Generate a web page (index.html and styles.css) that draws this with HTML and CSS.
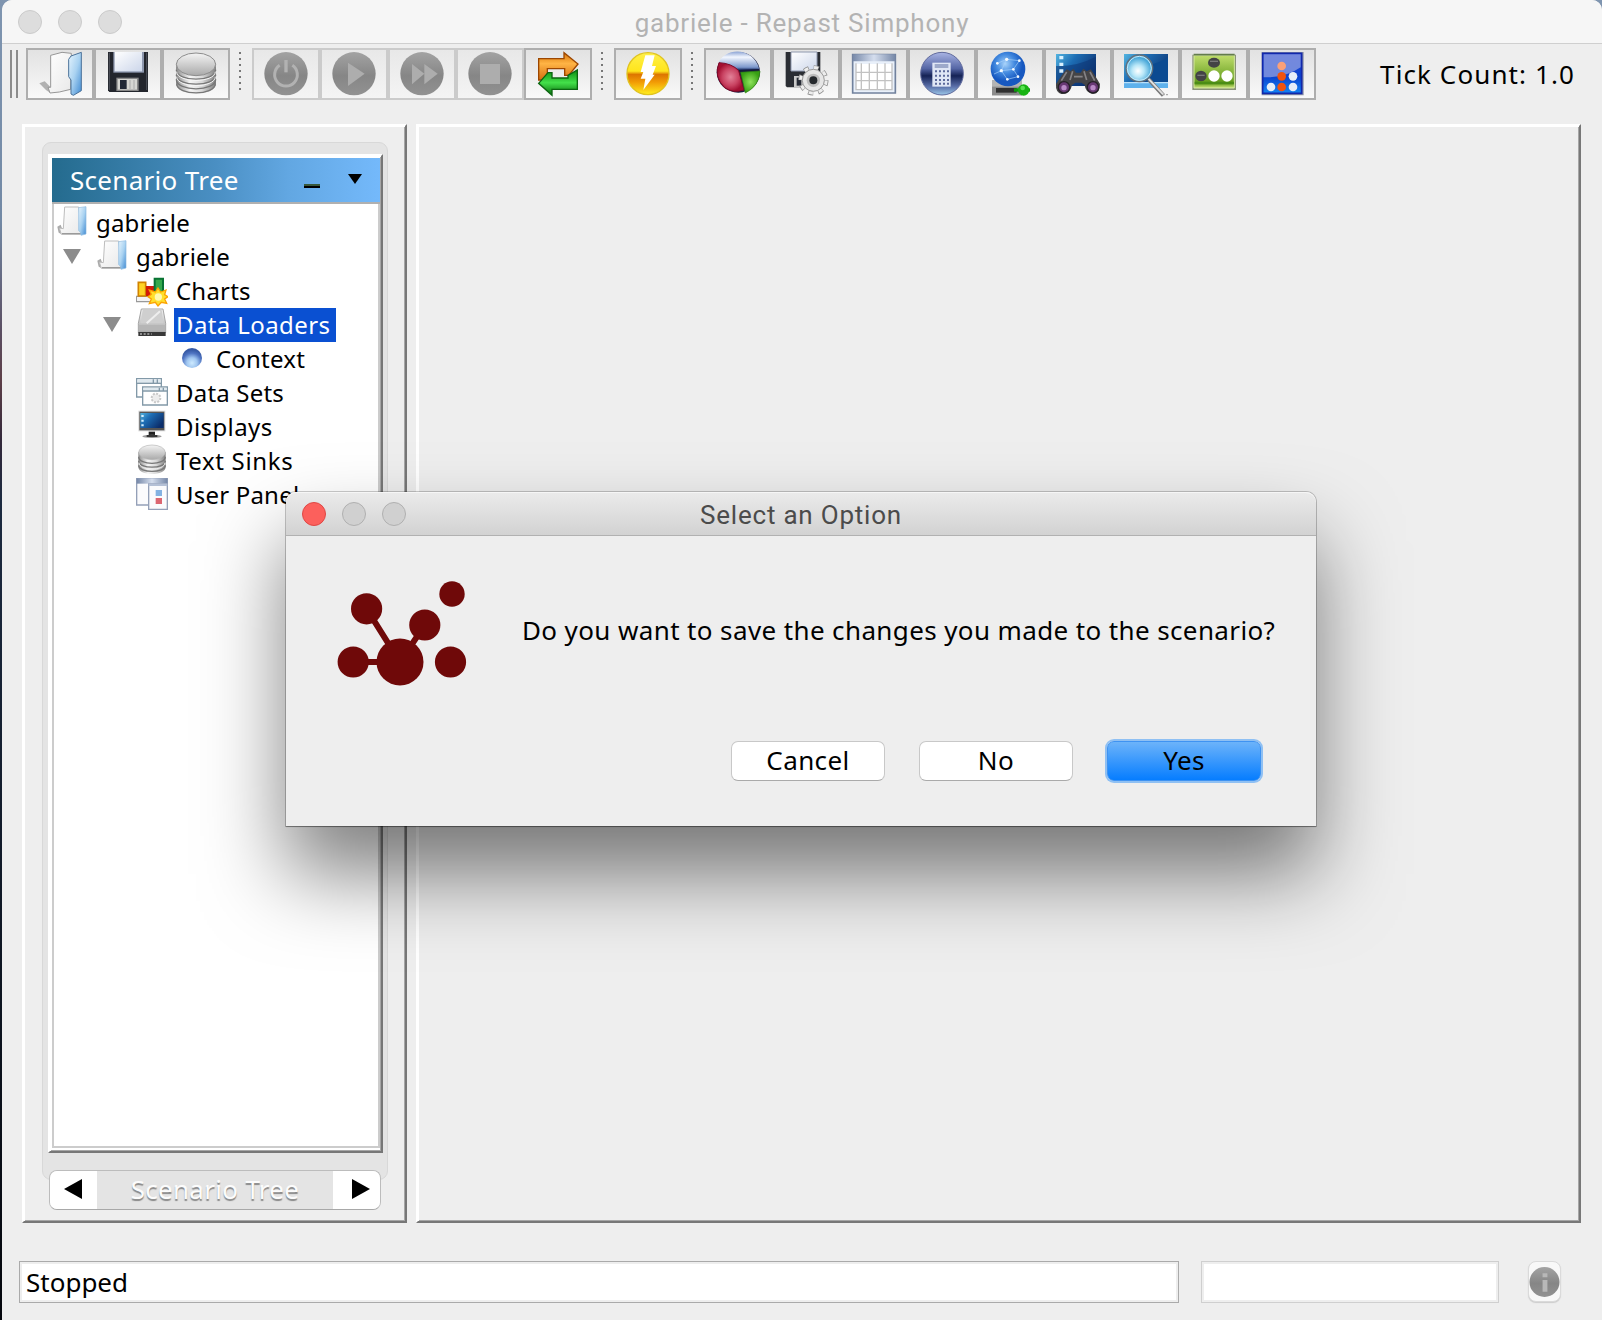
FILE: index.html
```html
<!DOCTYPE html>
<html lang="en">
<head>
<meta charset="utf-8">
<title>gabriele - Repast Simphony</title>
<link rel="stylesheet" href="styles.css">
</head>
<body>
<svg width="0" height="0" class="defs" aria-hidden="true">
  <defs>
    <linearGradient id="gDisc" x1="0" y1="0" x2="0" y2="1"><stop offset="0" stop-color="#a3a3a3"/><stop offset=".55" stop-color="#868686"/><stop offset="1" stop-color="#929292"/></linearGradient>
    <linearGradient id="gBlue" x1="0" y1="0" x2="1" y2="1"><stop offset="0" stop-color="#e6f4fd"/><stop offset=".5" stop-color="#a9d2f1"/><stop offset="1" stop-color="#3f8ad2"/></linearGradient>
    <linearGradient id="gPage" x1="0" y1="0" x2="1" y2="1"><stop offset="0" stop-color="#fff"/><stop offset="1" stop-color="#e9e9e9"/></linearGradient>
    <linearGradient id="gMetal" x1="0" y1="0" x2="1" y2="0"><stop offset="0" stop-color="#8b8b8b"/><stop offset=".35" stop-color="#f4f4f4"/><stop offset=".65" stop-color="#d9d9d9"/><stop offset="1" stop-color="#808080"/></linearGradient>
    <linearGradient id="gTop" x1="0" y1="0" x2="0" y2="1"><stop offset="0" stop-color="#f4f4f4"/><stop offset="1" stop-color="#a9a9a9"/></linearGradient>
    <linearGradient id="gLabel" x1="0" y1="0" x2="1" y2="1"><stop offset="0" stop-color="#fff"/><stop offset="1" stop-color="#ccd6ea"/></linearGradient>
    <linearGradient id="gOrange" x1="0" y1="0" x2="0" y2="1"><stop offset="0" stop-color="#d87408"/><stop offset=".4" stop-color="#ffb445"/><stop offset="1" stop-color="#d56e10"/></linearGradient>
    <linearGradient id="gGreen" x1="0" y1="0" x2="0" y2="1"><stop offset="0" stop-color="#0c8d10"/><stop offset=".5" stop-color="#43e04a"/><stop offset="1" stop-color="#076b0b"/></linearGradient>
    <linearGradient id="gBolt" x1="0" y1="0" x2="0" y2="1"><stop offset="0" stop-color="#fff04a"/><stop offset=".44" stop-color="#ffe51c"/><stop offset=".52" stop-color="#dd7600"/><stop offset=".7" stop-color="#f29b05"/><stop offset="1" stop-color="#fff01e"/></linearGradient>
    <linearGradient id="gPieTop" x1="0" y1="0" x2="0" y2="1"><stop offset="0" stop-color="#8ba3d4"/><stop offset=".3" stop-color="#f3f7ff"/><stop offset=".85" stop-color="#7d98cc"/><stop offset="1" stop-color="#152961"/></linearGradient>
    <radialGradient id="gPieRed"><stop offset="0" stop-color="#e38299"/><stop offset=".6" stop-color="#c94362"/><stop offset="1" stop-color="#a30f32"/></radialGradient>
    <radialGradient id="gPieGreen"><stop offset="0" stop-color="#8fe35c"/><stop offset="1" stop-color="#379f13"/></radialGradient>
    <linearGradient id="gHead" x1="0" y1="0" x2="1" y2="0"><stop offset="0" stop-color="#7688a8"/><stop offset=".5" stop-color="#d5deee"/><stop offset="1" stop-color="#7688a8"/></linearGradient>
    <linearGradient id="gCalc" x1="0" y1="0" x2="0" y2="1"><stop offset="0" stop-color="#a9b4e4"/><stop offset=".38" stop-color="#5566a5"/><stop offset=".55" stop-color="#152255"/><stop offset=".8" stop-color="#5a6fa9"/><stop offset="1" stop-color="#9cc8e8"/></linearGradient>
    <radialGradient id="gGlobe" cx=".42" cy=".35"><stop offset="0" stop-color="#a8d3fa"/><stop offset=".55" stop-color="#4289df"/><stop offset="1" stop-color="#1758c0"/></radialGradient>
    <linearGradient id="gScreen" x1="0" y1="0" x2="1" y2=".6"><stop offset="0" stop-color="#53b4e0"/><stop offset=".4" stop-color="#1d6db4"/><stop offset="1" stop-color="#0c2e6b"/></linearGradient>
    <radialGradient id="gLens" cx=".45" cy=".6"><stop offset="0" stop-color="#fff"/><stop offset=".45" stop-color="#b8e7f8"/><stop offset="1" stop-color="#46a6d8"/></radialGradient>
    <linearGradient id="gLawn" x1="0" y1="0" x2="0" y2="1"><stop offset="0" stop-color="#c0dd6c"/><stop offset=".5" stop-color="#86b53b"/><stop offset=".85" stop-color="#61991b"/><stop offset="1" stop-color="#d0e87c"/></linearGradient>
    <linearGradient id="gBoard" x1="0" y1="0" x2="0" y2="1"><stop offset="0" stop-color="#2440cf"/><stop offset=".6" stop-color="#0b45d0"/><stop offset="1" stop-color="#1485f4"/></linearGradient>
    <radialGradient id="gBall" cx=".5" cy=".75" r=".65"><stop offset="0" stop-color="#cdeaff"/><stop offset=".4" stop-color="#a0c6f0"/><stop offset=".75" stop-color="#4f74c2"/><stop offset="1" stop-color="#375aa5"/></radialGradient>
    <symbol id="folder" viewBox="168 288 96 102">
      <path d="M172 350L182 344L190 366L184 372L176 368Z" fill="#aaa"/>
      <path d="M194 291L236 291L246 366L242 373H184L178 354L190 356Z" fill="url(#gPage)" stroke="#bdbdbd" stroke-width="3"/>
      <path d="M186 371H244" stroke="#8d8d8d" stroke-width="3"/>
      <path d="M236 293L258 290V372L243 376L241 366L236 362Z" fill="url(#gBlue)" stroke="#8cb9df" stroke-width="2"/>
    </symbol>
  </defs>
</svg>

<div class="window">
  <header class="titlebar">
    <div class="lights"><i></i><i></i><i></i></div>
    <h1>gabriele - Repast Simphony</h1>
  </header>

  <div class="toolbar">
    <div class="grip"></div>
    <div class="group">
      <button class="tool"><svg viewBox="84 150 192 144"><path d="M118 250L134 244L152 262L150 278L138 270Z" fill="#8d8d8d" opacity=".65"/><path d="M152 166L186 157L214 160L212 268L178 276L150 279L144 262H152Z" fill="url(#gPage)" stroke="#979797" stroke-width="3"/><path d="M206 178L213 168L244 157V272L220 286L213 282V240L206 230Z" fill="url(#gBlue)" stroke="#4b7299" stroke-width="3"/></svg></button>
      <button class="tool"><svg viewBox="288 150 192 144"><path d="M324 156H444V276H328L324 271Z" fill="#23262d"/><path d="M328 158V270M440 158V270" stroke="#50545d" stroke-width="3"/><path d="M340 156H432V218H340Z" fill="#8e98ae"/><path d="M344 156H426V214H344Z" fill="url(#gLabel)"/><path d="M349 233H416V273H349Z" fill="#888"/><path d="M353 237H411V269H353Z" fill="#d6d6d2"/><path d="M360 240H380V267H360Z" fill="#222936"/><path d="M390 240V267M402 240V267" stroke="#aaa" stroke-width="3"/></svg></button>
      <button class="tool"><svg viewBox="492 150 192 144"><path d="M528 190V250C528 291 648 291 648 250V190Z" fill="url(#gMetal)"/><path d="M529 209C529 247 647 247 647 209M529 224C529 262 647 262 647 224M529 238C529 276 647 276 647 238M530 251C532 288 644 288 646 251" fill="none" stroke="#777" stroke-width="4"/><path d="M530 215C531 250 645 250 646 215M530 230C531 266 645 266 646 230" fill="none" stroke="#f5f5f5" stroke-width="3"/><ellipse cx="588" cy="193" rx="59" ry="34" fill="url(#gTop)" stroke="#8d8d8d" stroke-width="3"/></svg></button>
    </div>
    <div class="dots"></div>
    <div class="group">
      <button class="tool off"><svg viewBox="0 0 192 144"><circle cx="96" cy="71" r="65" fill="url(#gDisc)"/><path d="M77 46A34 34 0 1 0 115 46" fill="none" stroke="#b2b2b2" stroke-width="9"/><path d="M96 30V67" stroke="#b2b2b2" stroke-width="10"/></svg></button>
      <button class="tool off"><svg viewBox="0 0 192 144"><circle cx="96" cy="71" r="65" fill="url(#gDisc)"/><path d="M78 38L128 71L78 108Z" fill="#adadad"/></svg></button>
      <button class="tool off"><svg viewBox="0 0 192 144"><circle cx="96" cy="71" r="65" fill="url(#gDisc)"/><path d="M66 42L103 71L66 103ZM103 42L143 71L103 103Z" fill="#adadad"/></svg></button>
      <button class="tool off"><svg viewBox="0 0 192 144"><circle cx="96" cy="71" r="65" fill="url(#gDisc)"/><path d="M66 42H126V102H66Z" fill="#adadad"/></svg></button>
      <button class="tool"><svg viewBox="378 150 192 144"><path d="M416 176H492V158L534 192L506 226H494V206H442V240H416Z" fill="url(#gOrange)" stroke="#9c4600" stroke-width="4"/><path d="M532 210V268H456V286L416 250L444 218H456V234H504V226Z" fill="url(#gGreen)" stroke="#0b6510" stroke-width="4"/></svg></button>
    </div>
    <div class="dots"></div>
    <div class="group">
      <button class="tool"><svg viewBox="648 150 192 144"><circle cx="744" cy="221" r="63" fill="url(#gBolt)" stroke="#e0c320" stroke-width="4"/><path d="M736 166H764L756 198H768L758 224H764L730 270L736 236H722L730 216H722Z" fill="#fff"/></svg></button>
    </div>
    <div class="dots"></div>
    <div class="group">
      <button class="tool"><svg viewBox="48 150 192 144"><ellipse cx="145" cy="217" rx="65" ry="61" fill="#15193c"/><path d="M84 192C104 140 190 140 208 207L146 210Q120 190 84 192Z" fill="url(#gPieTop)"/><path d="M87 188Q126 190 146 212L162 270Q130 281 104 263Q70 230 87 188Z" fill="url(#gPieRed)" stroke="#7d0a29" stroke-width="3"/><path d="M152 217L210 213Q208 258 166 279Z" fill="url(#gPieGreen)" stroke="#2f8413" stroke-width="2"/></svg></button>
      <button class="tool"><svg viewBox="252 150 192 144"><path d="M287 156H391V262H291L287 258Z" fill="#2a2d33"/><path d="M303 156H381V213H303Z" fill="url(#gLabel)" stroke="#8e98ae" stroke-width="3"/><path d="M312 228H340V262H312Z" fill="#c9c9c9"/><path d="M320 233H334V257H320Z" fill="#262b35"/><circle cx="370" cy="241" r="38" fill="none" stroke="#8d8d8d" stroke-width="15" stroke-dasharray="15 14.85"/><circle cx="370" cy="241" r="38" fill="none" stroke="#ededed" stroke-width="10" stroke-dasharray="12 17.85" stroke-dashoffset="-1"/><circle cx="370" cy="241" r="33" fill="#e6e6e6" stroke="#9c9c9c" stroke-width="3"/><circle cx="370" cy="241" r="20" fill="#bdbdbd"/><circle cx="370" cy="241" r="12" fill="#24282c"/></svg></button>
      <button class="tool"><svg viewBox="456 150 192 144"><path d="M488 164H616V279H488Z" fill="#e9f0fa" stroke="#71819d" stroke-width="5"/><path d="M488 163H616V184H488Z" fill="url(#gHead)"/><path d="M498 192H606V269H498Z" fill="#fff"/><path d="M514 190V271M538 190V271M562 190V271M585 190V271M498 217H608M498 242H608M498 269H608M606 190V271M498 190V271" stroke="#c2c2c2" stroke-width="4"/></svg></button>
      <button class="tool"><svg viewBox="660 150 192 144"><circle cx="756" cy="221" r="64" fill="url(#gCalc)" stroke="#616b9d" stroke-width="3"/><path d="M727 188H782V260H727Z" fill="#dfe6f5"/><path d="M734 192H775V204H734Z" fill="#9da9ca"/><path d="M735 214H777M735 227H777M735 240H777M735 251H777" stroke="#5d6a9b" stroke-width="6" stroke-dasharray="6 6"/></svg></button>
      <button class="tool"><svg viewBox="864 150 192 144"><path d="M906 240H996V286H906Z" fill="#b4b4b4"/><path d="M906 260H996V286H906Z" fill="#8c8c8c"/><path d="M918 264H980V278H918Z" fill="#303030"/><circle cx="954" cy="207" r="52" fill="url(#gGlobe)"/><path d="M922 190L950 178L988 182L970 208L984 230M950 178L934 212L970 208M934 212L952 238L984 230M934 212L912 222" fill="none" stroke="#a6d0fa" stroke-width="2"/><g fill="#f4faff"><circle cx="922" cy="190" r="4"/><circle cx="950" cy="178" r="5"/><circle cx="988" cy="182" r="4"/><circle cx="934" cy="212" r="5"/><circle cx="970" cy="208" r="4"/><circle cx="952" cy="238" r="4"/><circle cx="984" cy="230" r="4"/></g><path d="M972 270H1020" stroke="#0a9a0a" stroke-width="10"/><circle cx="1001" cy="270" r="17" fill="#18b313"/><circle cx="998" cy="264" r="7" fill="#58e14f"/></svg></button>
      <button class="tool"><svg viewBox="1068 150 192 144"><path d="M1098 162H1218V258H1098Z" fill="url(#gScreen)"/><path d="M1098 198Q1160 200 1218 170V258H1098Z" fill="#0c3475" opacity=".55"/><path d="M1108 168H1120V178H1108ZM1108 188H1120V198H1108ZM1108 208H1120V218H1108Z" fill="#d9f1ff"/><path d="M1118 222L1130 208L1142 214L1150 206L1158 218H1172L1180 206L1190 214L1202 208L1212 222L1230 252Q1230 284 1206 281Q1186 276 1184 254L1174 248H1156L1146 256Q1140 284 1114 282Q1096 276 1098 252Z" fill="#454446"/><path d="M1130 216L1114 242M1148 214L1140 240M1200 216L1214 242M1182 214L1190 240M1152 230H1178" stroke="#858386" stroke-width="5"/><circle cx="1122" cy="262" r="17" fill="#673873" stroke="#252027" stroke-width="4"/><circle cx="1209" cy="262" r="17" fill="#673873" stroke="#252027" stroke-width="4"/><circle cx="1122" cy="263" r="8" fill="#b98ac6"/><circle cx="1209" cy="263" r="8" fill="#b98ac6"/></svg></button>
      <button class="tool"><svg viewBox="42 150 192 144"><path d="M72 162H204V264H72Z" fill="url(#gScreen)"/><path d="M140 196Q180 190 204 172V246H140Z" fill="#0b4a91"/><path d="M72 246H204V264H72Z" fill="#5eb1ec"/><path d="M72 248H204" stroke="#b8e0fa" stroke-width="4"/><path d="M146 238L190 286" stroke="#777" stroke-width="12"/><path d="M145 236L190 284" stroke="#e0e0e0" stroke-width="6"/><circle cx="118" cy="205" r="40" fill="url(#gLens)" stroke="#656f79" stroke-width="4"/><circle cx="118" cy="205" r="36" fill="none" stroke="#c5eafa" stroke-width="3"/><path d="M188 284H205" stroke="#aaa" stroke-width="4" stroke-dasharray="6 4"/></svg></button>
      <button class="tool"><svg viewBox="246 150 192 144"><path d="M277 164H408V270H277Z" fill="#8a9478"/><path d="M282 166H403V264H282Z" fill="url(#gLawn)" stroke="#d5e8a0" stroke-width="3"/><path d="M281 164H404" stroke="#637c4c" stroke-width="5"/><path d="M284 249H402" stroke="#4b8d15" stroke-width="7"/><ellipse cx="342" cy="188" rx="18" ry="15" fill="#434345"/><path d="M330 184H354" stroke="#777" stroke-width="4"/><ellipse cx="303" cy="228" rx="17" ry="16" fill="#434345"/><path d="M292 226H314" stroke="#777" stroke-width="4"/><circle cx="342" cy="228" r="17" fill="#fff"/><circle cx="381" cy="228" r="17" fill="#fff"/></svg></button>
      <button class="tool"><svg viewBox="450 150 192 144"><path d="M485 156H611V286H485Z" fill="#8d92a5"/><path d="M488 160H605V280H488Z" fill="url(#gBoard)" stroke="#1228ab" stroke-width="5"/><path d="M491 163H602V202Q556 234 491 232Z" fill="#8395df" opacity=".85"/><circle cx="545" cy="198" r="13" fill="#fba078"/><circle cx="545" cy="229" r="13" fill="#f0530f"/><circle cx="545" cy="261" r="13" fill="#f0530f"/><g fill="#e6eef8"><circle cx="579" cy="229" r="13"/><circle cx="513" cy="261" r="13"/><circle cx="579" cy="261" r="13"/></g></svg></button>
    </div>
    <div class="tick">Tick Count: 1.0</div>
  </div>

  <main class="workspace">
    <section class="panel side">
      <div class="dock">
        <div class="frame">
          <div class="frame-head">
            <span>Scenario Tree</span>
            <i class="minimize"></i>
            <svg class="menu-arrow" viewBox="0 0 14 10"><path d="M0 0H14L7 10Z"/></svg>
          </div>
          <div class="tree">
            <div class="row d0"><svg class="icon"><use href="#folder"/></svg><span class="tight">gabriele</span></div>
            <div class="row d1"><svg class="twisty" viewBox="0 0 33 34"><path d="M0 9H18L9 24Z"/></svg><svg class="icon"><use href="#folder"/></svg><span class="tight">gabriele</span></div>
            <div class="row d2"><svg class="icon" viewBox="408 492 96 102"><path d="M409 559H460V575H409Z" fill="#f3f3f3" stroke="#999" stroke-width="4"/><path d="M415 517H437V558H415Z" fill="#ffd426" stroke="#d28300" stroke-width="5"/><path d="M438 528H462V558H438Z" fill="#d21b08"/><path d="M464 506H489V550H464Z" fill="#35a84c" stroke="#087333" stroke-width="6"/><path d="M474 534L482 546L498 540L494 554L504 560L494 567L500 580L484 577L474 588L466 577L448 581L454 567L444 560L454 553L448 540L466 546Z" fill="#ffdf2d" stroke="#fca303" stroke-width="4"/><circle cx="475" cy="561" r="11" fill="#fff9b0"/></svg><span class="tight">Charts</span></div>
            <div class="row d2 open"><svg class="twisty" viewBox="0 0 33 34"><path d="M0 9H18L9 24Z"/></svg><svg class="icon" viewBox="408 594 96 102"><path d="M424 597H489L497 640V668H415V640Z" fill="url(#gTop)" stroke="#a5a5a5" stroke-width="3"/><path d="M428 600H485L490 640H422Z" fill="#cfcfcf"/><path d="M440 640L480 604" stroke="#eee" stroke-width="6"/><path d="M416 645H496V662H416Z" fill="#b6b6b6"/><path d="M415 666H497V678H415Z" fill="#383838"/><path d="M420 672H455" stroke="#aaa" stroke-width="5" stroke-dasharray="6 5"/></svg><span class="selected">Data Loaders</span></div>
            <div class="row d3"><svg class="icon" viewBox="528 6 96 102"><circle cx="576" cy="54" r="30" fill="url(#gBall)"/></svg><span class="tight">Context</span></div>
            <div class="row d2"><svg class="icon" viewBox="408 108 96 102"><path d="M410 116H484V171H410Z" fill="#fff" stroke="#8299a8" stroke-width="4"/><path d="M412 118H482V129H412Z" fill="#dfe9ef"/><path d="M410 130H484" stroke="#8299a8" stroke-width="4"/><path d="M428 141H502V195H428Z" fill="#fff" stroke="#8299a8" stroke-width="4"/><path d="M430 143H500V151H430Z" fill="#dfe9ef"/><path d="M428 153H502M460 118V129M472 118V129M478 143V152M490 143V152" stroke="#8299a8" stroke-width="4"/><circle cx="468" cy="174" r="13" fill="#ececec" stroke="#c9c9c9" stroke-width="6" stroke-dasharray="6 4"/></svg><span class="tight">Data Sets</span></div>
            <div class="row d2"><svg class="icon" viewBox="408 210 96 102"><path d="M415 212H496V274H415Z" fill="#dadada"/><path d="M418 215H493V271H418Z" fill="#555"/><path d="M421 219H491V264H421Z" fill="url(#gScreen)"/><path d="M424 225H431V231H424ZM424 239H431V245H424ZM424 253H431V259H424Z" fill="#d4efff"/><path d="M446 275H465V286H446Z" fill="#222"/><ellipse cx="456" cy="289" rx="29" ry="5" fill="#999"/><path d="M440 288H472" stroke="#222" stroke-width="5"/></svg><span>Displays</span></div>
            <div class="row d2"><svg class="icon" viewBox="408 312 96 102"><path d="M415 336V380C415 409 497 409 497 380V336Z" fill="url(#gMetal)"/><path d="M416 350C416 377 496 377 496 350M416 362C416 388 496 388 496 362M416 376C416 400 496 400 496 376" fill="none" stroke="#777" stroke-width="4"/><path d="M417 368C418 394 494 394 495 368" fill="none" stroke="#eee" stroke-width="3"/><ellipse cx="456" cy="337" rx="40" ry="22" fill="url(#gTop)" stroke="#b5b5b5" stroke-width="2"/></svg><span class="loose">Text Sinks</span></div>
            <div class="row d2"><svg class="icon" viewBox="408 414 96 102"><path d="M410 416H502V495H410Z" fill="#fbfbfd" stroke="#94a0b8" stroke-width="4"/><path d="M410 415H502V431H410Z" fill="url(#gHead)"/><path d="M446 432H502V508H446Z" fill="#fbfbfd" stroke="#94a0b8" stroke-width="4"/><path d="M446 431H502V438H446Z" fill="#b4c0d6"/><path d="M467 450H486V468H467Z" fill="#84b2e2"/><path d="M467 474H486V492H467Z" fill="#dc6671"/></svg><span class="tight">User Panel</span></div>
          </div>
        </div>
      </div>
      <div class="tabs">
        <button><svg viewBox="0 0 18 20"><path d="M18 0V20L0 10Z"/></svg></button>
        <span>Scenario Tree</span>
        <button><svg viewBox="0 0 18 20"><path d="M0 0V20L18 10Z"/></svg></button>
      </div>
    </section>
    <section class="panel canvas"></section>
  </main>

  <footer class="status">
    <div class="field message">Stopped</div>
    <div class="field progress"></div>
    <button class="info"><svg viewBox="0 0 32 32"><circle cx="16" cy="16" r="15.5" fill="url(#gDisc)"/><path d="M14 14H19V26H14ZM14 7H19V11H14Z" fill="#b8b8b8"/></svg></button>
  </footer>
</div>

<div class="dialog" role="dialog">
  <div class="dialog-bar">
    <div class="lights"><i class="close"></i><i></i><i></i></div>
    <h2>Select an Option</h2>
  </div>
  <div class="dialog-body">
    <svg class="logo" viewBox="336 580 132 108"><g fill="none" stroke="#6f0909" stroke-width="6"><path d="M366.600 608.800L400 662L424.800 625M353 662H400"/></g><g fill="#6f0909"><circle cx="366.600" cy="608.800" r="15.600"/><circle cx="424.800" cy="625" r="15.600"/><circle cx="452" cy="594" r="12.700"/><circle cx="353.200" cy="662" r="15.600"/><circle cx="400" cy="662" r="23.500"/><circle cx="450.500" cy="662" r="15.600"/></g></svg>
    <p>Do you want to save the changes you made to the scenario?</p>
  </div>
  <div class="actions">
    <button>Cancel</button>
    <button>No</button>
    <button class="primary">Yes</button>
  </div>
</div>
</body>
</html>
```
FILE: styles.css
```css
* { box-sizing: border-box; }

body {
  margin: 0;
  width: 1602px;
  height: 1320px;
  overflow: hidden;
  position: relative;
  padding-left: 2px;
  background: linear-gradient(#7f95b0 0, #7289a5 220px, #5b4f63 330px, #5d3f48 380px, #33283a 440px, #1c2a40 500px, #0d1420 1000px, #05070d 1320px);
  font-family: "Noto Sans", "Open Sans", sans-serif;
  font-size: 26px;
  color: #000;
}

button { font: inherit; color: inherit; padding: 0; margin: 0; border: 0; background: none; }
svg { display: block; }
.defs { position: absolute; }

.window {
  height: 1320px;
  display: flex;
  flex-direction: column;
  background: #eee;
  border-radius: 10px 10px 0 0;
}

.titlebar, .dialog-bar {
  display: grid;
  grid-template-columns: 1fr auto 1fr;
  align-items: center;
  height: 44px;
  flex: none;
  padding: 0 16px;
}
.titlebar {
  background: #f6f6f6;
  border-bottom: 1px solid #cfcfcf;
  border-radius: 10px 10px 0 0;
}
h1, h2 {
  margin: 0;
  padding-top: 2px;
  font: 400 26px/42px Roboto, sans-serif;
  letter-spacing: .78px;
  color: #b3b3b3;
}
.lights { display: flex; gap: 16px; }
.lights i {
  width: 24px;
  height: 24px;
  border-radius: 50%;
  background: #ddd;
  border: 1px solid #cbcbcb;
}

.toolbar {
  height: 80px;
  padding: 4px 27px 0 8px;
  display: flex;
  align-items: flex-start;
  flex: none;
}
.grip {
  width: 8px;
  height: 48px;
  margin: 2px 8px 0 0;
  border: solid #8c8c8c;
  border-width: 0 2px;
}
.group { display: flex; }
.tool {
  width: 68px;
  height: 52px;
  border: 2px solid #aeaeae;
  background: linear-gradient(#e2e2e2, #f9f9f9);
}
.tool svg { width: 64px; height: 48px; }
.tool.off { border-color: #cbcbcb; background: linear-gradient(#e8e8e8, #f4f4f4); }
.dots {
  width: 2px;
  height: 38px;
  margin: 4px 11px 0 9px;
  background: repeating-linear-gradient(#777 0 2px, transparent 2px 6px);
}
.tick {
  margin-left: auto;
  line-height: 52px;
  letter-spacing: 1.1px;
  white-space: pre;
}

.workspace { display: flex; gap: 9px; height: 1099px; padding: 0 21px 0 20px; flex: none; }
.panel, .frame {
  border: 2px solid;
  border-color: #fff #777 #777 #fff;
  box-shadow: inset 1px 1px #fff, inset -1px -1px #a6a6a6;
}
.side { width: 385px; flex: none; padding: 16px 17px 0 18px; }
.canvas { flex: 1; }
.dock {
  height: 1038px;
  padding: 11px 4px 0 5px;
  background: #e4e4e4;
  border: 1px solid #d8d8d8;
  border-radius: 9px;
}
.frame {
  height: 999px;
  padding: 2px 1px 3px 2px;
  background: #fff;
  display: flex;
  flex-direction: column;
}
.frame-head {
  height: 46px;
  flex: none;
  display: flex;
  padding-left: 18px;
  background: linear-gradient(90deg, #246b8e, #4a8fc3 50%, #62a7e2 72%, #74b9fb);
  border-bottom: 2px solid #b0b0b0;
  color: #fff;
  line-height: 44px;
  letter-spacing: .3px;
}
.frame-head span { width: 234px; }
.minimize { width: 16px; height: 4px; margin-top: 26px; background: #000; border-top: 2px solid #38583a; }
.menu-arrow { width: 14px; height: 10px; margin: 16px 0 0 28px; }

.tree { flex: 1; border: 2px solid #ccc; border-top: 0; padding-top: 2px; font-size: 24px; }
.row { display: flex; height: 34px; line-height: 34px; letter-spacing: .4px; }
.d0 { padding-left: 2px; }
.d1 { padding-left: 9px; }
.d2 { padding-left: 82px; }
.d2.open { padding-left: 49px; }
.d3 { padding-left: 122px; }
.icon { width: 32px; height: 34px; margin-right: 6px; flex: none; }
.twisty { width: 33px; height: 34px; fill: #8c8c8c; flex: none; }
.row span { padding-left: 2px; white-space: nowrap; }
.row .tight { letter-spacing: .2px; }
.row .loose { letter-spacing: .65px; }
.row .selected { width: 162px; background: #0a50d2; color: #fff; }

.tabs {
  position: relative;
  display: flex;
  width: 332px;
  height: 40px;
  margin: -10px 0 0 7px;
  border: 1px solid #bcbcbc;
  border-bottom-color: #a8a8a8;
  border-radius: 8px;
  background: #e4e4e4;
  overflow: hidden;
}
.tabs button { width: 47px; background: #fff; display: flex; align-items: center; }
.tabs button svg { width: 18px; height: 20px; margin: -2px 0 0 14px; }
.tabs button:last-child svg { margin-left: 19px; }
.tabs span {
  flex: 1;
  text-align: center;
  line-height: 36px;
  color: #fcfcfc;
  letter-spacing: .3px;
  text-shadow: 0 1.500px 1px #888;
}

.status { display: flex; padding: 38px 0 0 17px; align-items: flex-start; }
.field { height: 42px; border: 1px solid #aaa; background: #fff; box-shadow: inset 0 0 0 2px #eee; }
.message { width: 1160px; padding-left: 6px; line-height: 41px; }
.progress { width: 298px; margin-left: 22px; border-color: #cfcfcf; }
.info {
  width: 33px;
  height: 41px;
  margin-left: 29px;
  border: 1px solid #dadada;
  border-radius: 8px;
  background: #f8f8f8;
  box-shadow: 0 1px 1px #ccc;
}
.info svg { width: 31px; height: 32px; }

.dialog {
  position: absolute;
  left: 286px;
  top: 492px;
  width: 1030px;
  height: 334px;
  background: #eee;
  border-radius: 10px 10px 0 0;
  box-shadow: 0 0 0 1px rgba(0,0,0,.2), 0 1px 1px rgba(0,0,0,.3), 0 48px 82px rgba(0,0,0,.5);
}
.dialog-bar {
  background: linear-gradient(#ebebeb, #d2d2d2);
  border-bottom: 1px solid #b1b1b1;
  border-radius: 10px 10px 0 0;
  box-shadow: inset 0 1px #f6f6f6;
}
.dialog-bar h2 { color: #4b4b4b; }
.dialog-bar i { background: #d0d0d0; border-color: #b0b0b0; }
.dialog-bar .close { background: #fc605c; border-color: #df4744; }
.dialog-body { display: flex; padding: 44px 0 0 50px; }
.logo { width: 132px; height: 108px; }
.dialog-body p {
  margin: 32px 0 0 54px;
  line-height: 36px;
  letter-spacing: .38px;
  white-space: nowrap;
}
.actions { display: flex; gap: 34px; justify-content: flex-end; padding: 53px 55px 0 0; }
.actions button {
  width: 154px;
  height: 40px;
  border: 1px solid #c8c8c8;
  border-bottom-color: #aaa;
  border-radius: 7px;
  background: #fff;
  letter-spacing: .4px;
  line-height: 36px;
  padding-bottom: 2px;
}
.actions .primary {
  border: 1px solid #3f93f2;
  background: linear-gradient(#6cb3fa, #067dff);
  box-shadow: 0 0 0 2px #8fc0f3;
}
```
